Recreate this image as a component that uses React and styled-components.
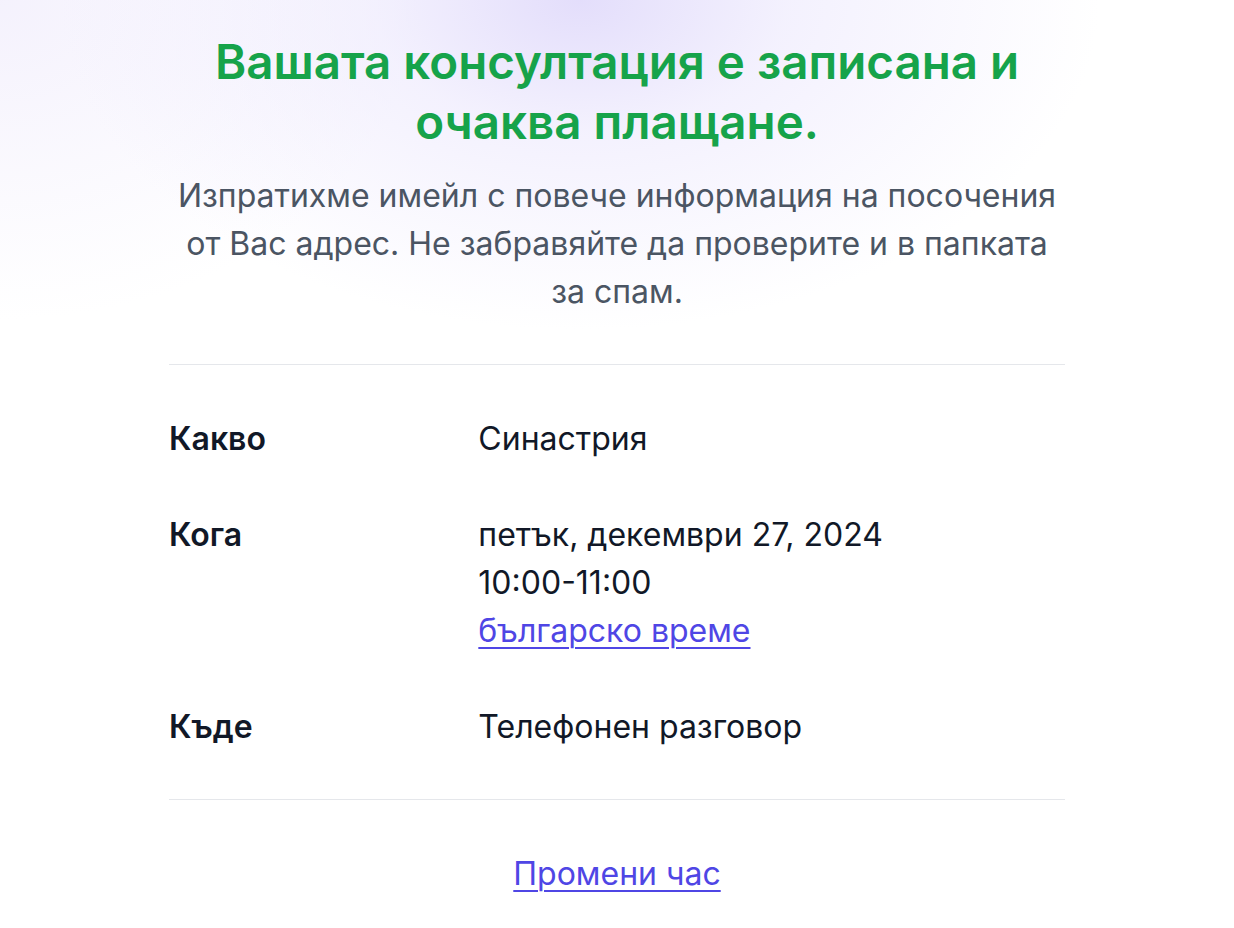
import React from "react";
import styled, { createGlobalStyle } from "styled-components";

const GlobalStyle = createGlobalStyle`
  html, body { margin: 0; padding: 0; background: #ffffff; }
  body { font-family: Inter, "Noto Sans", sans-serif; -webkit-font-smoothing: antialiased; }
  * { box-sizing: border-box; }
`;

const Page = styled.main`
  min-height: 928px;
  background:
    radial-gradient(ellipse 520px 330px at 47% 0%, rgba(226, 220, 251, 0.95) 0%, rgba(236, 232, 253, 0.6) 40%, rgba(255, 255, 255, 0) 100%),
    radial-gradient(ellipse 420px 320px at 0% 0%, rgba(240, 236, 252, 0.7) 0%, rgba(255, 255, 255, 0) 100%),
    #ffffff;
  padding: 32px 0 40px;
`;

const Container = styled.div`
  max-width: 896px;
  margin: 0 auto;
  display: flex;
  flex-direction: column;
`;

const Title = styled.h1`
  margin: 0;
  font-size: 47.5px;
  line-height: 60px;
  font-weight: 600;
  color: #16a34a;
  text-align: center;
`;

const Lead = styled.p`
  margin: 20px 0 0;
  font-size: 32px;
  line-height: 48px;
  color: #4b5563;
  text-align: center;
`;

const Details = styled.dl`
  margin: 48px 0 0;
  padding: 26px 0 24px;
  border-top: 1px solid #e5e7eb;
  border-bottom: 1px solid #e5e7eb;
`;

const Row = styled.div`
  display: grid;
  grid-template-columns: 1fr 2fr;
  column-gap: 16px;
  padding: 24px 0;
`;

const Label = styled.dt`
  margin: 0;
  font-size: 32px;
  line-height: 48px;
  font-weight: 600;
  color: #111827;
`;

const Value = styled.dd`
  margin: 0;
  font-size: 32px;
  line-height: 48px;
  color: #111827;
  display: flex;
  flex-direction: column;
`;

const Link = styled.a`
  color: #4f46e5;
  text-decoration: underline;
  text-underline-offset: 5px;
  text-decoration-thickness: 2px;
  font-size: 32px;
  line-height: 48px;
`;

const Footer = styled.div`
  margin-top: 50px;
  text-align: center;
`;

export default function App() {
  return (
    <>
      <GlobalStyle />
      <Page>
        <Container>
          <Title>Вашата консултация е записана и очаква плащане.</Title>
          <Lead>
            Изпратихме имейл с повече информация на посочения от Вас адрес. Не
            забравяйте да проверите и в папката за спам.
          </Lead>
          <Details>
            <Row>
              <Label>Какво</Label>
              <Value>Синастрия</Value>
            </Row>
            <Row>
              <Label>Кога</Label>
              <Value>
                <span>петък, декември 27, 2024</span>
                <span>10:00-11:00</span>
                <span>
                  <Link href="#">българско време</Link>
                </span>
              </Value>
            </Row>
            <Row>
              <Label>Къде</Label>
              <Value>Телефонен разговор</Value>
            </Row>
          </Details>
          <Footer>
            <Link href="#">Промени час</Link>
          </Footer>
        </Container>
      </Page>
    </>
  );
}
